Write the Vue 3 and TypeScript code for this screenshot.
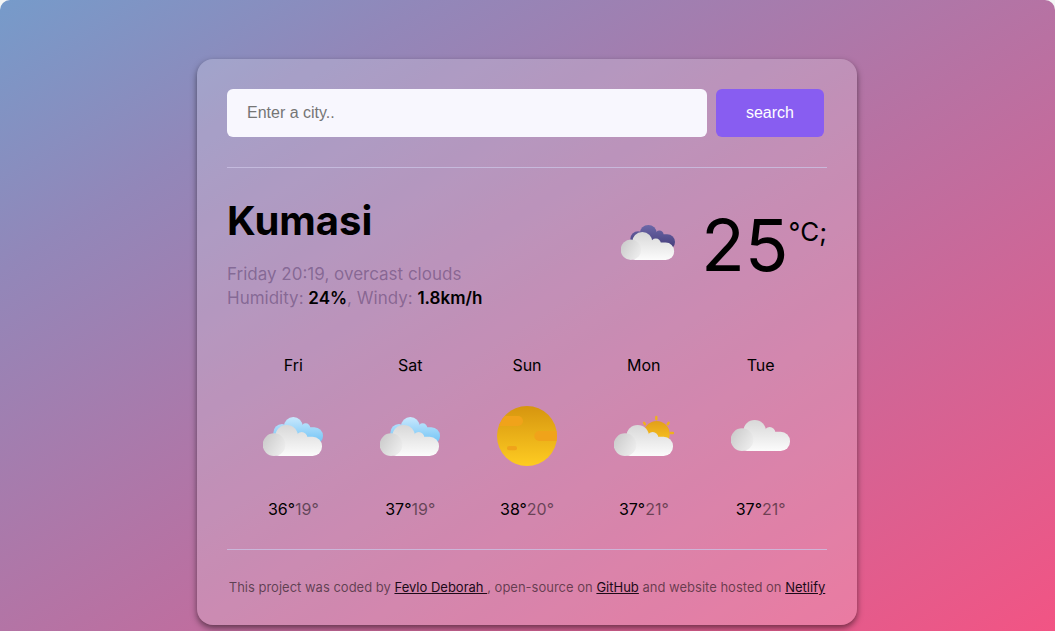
<script setup lang="ts">
import { ref } from 'vue'

type Sky = 'few' | 'clear' | 'partly' | 'cloudy'

interface ForecastDay {
  name: string
  sky: Sky
  high: number
  low: number
}

const query = ref('')

const forecast: ForecastDay[] = [
  { name: 'Fri', sky: 'few', high: 36, low: 19 },
  { name: 'Sat', sky: 'few', high: 37, low: 19 },
  { name: 'Sun', sky: 'clear', high: 38, low: 20 },
  { name: 'Mon', sky: 'partly', high: 37, low: 21 },
  { name: 'Tue', sky: 'cloudy', high: 37, low: 21 },
]
</script>

<template>
  <div class="page">
    <svg class="defs" width="0" height="0" aria-hidden="true">
      <defs>
        <linearGradient id="cloud-body" gradientUnits="userSpaceOnUse" x1="0" y1="57" x2="0" y2="149">
          <stop offset="0" stop-color="#d8d8d8" />
          <stop offset="1" stop-color="#fbfbfb" />
        </linearGradient>
        <linearGradient id="cloud-puff" x1="0.1" y1="0.2" x2="0.9" y2="0.7">
          <stop offset="0" stop-color="#cdcdcd" />
          <stop offset="1" stop-color="#ebebeb" />
        </linearGradient>
        <linearGradient id="cloud-blue" gradientUnits="userSpaceOnUse" x1="0" y1="33" x2="0" y2="115">
          <stop offset="0" stop-color="#c9e8fd" />
          <stop offset="1" stop-color="#6cc2f5" />
        </linearGradient>
        <linearGradient id="cloud-dark" gradientUnits="userSpaceOnUse" x1="0" y1="33" x2="0" y2="115">
          <stop offset="0" stop-color="#6c68a8" />
          <stop offset="1" stop-color="#423a78" />
        </linearGradient>
        <linearGradient id="sun-fill" x1="0" y1="0" x2="0" y2="1">
          <stop offset="0" stop-color="#d6950f" />
          <stop offset="1" stop-color="#fecc22" />
        </linearGradient>
        <linearGradient id="sun-small" x1="0" y1="0" x2="0" y2="1">
          <stop offset="0" stop-color="#e29f1a" />
          <stop offset="1" stop-color="#fecc22" />
        </linearGradient>
        <clipPath id="sun-disc"><circle cx="90" cy="90" r="90" /></clipPath>
        <g id="front-cloud">
          <g fill="url(#cloud-body)">
            <circle cx="71" cy="91" r="34" />
            <circle cx="116" cy="95" r="17" />
            <rect x="20" y="92" width="157" height="58" rx="28" />
          </g>
          <circle cx="33" cy="116" r="34" fill="url(#cloud-puff)" />
        </g>
        <g id="back-cloud">
          <circle cx="91" cy="61" r="28" />
          <circle cx="57" cy="80" r="26" />
          <circle cx="128" cy="66" r="14" />
          <rect x="55" y="64" width="125" height="52" rx="26" />
        </g>
      </defs>
    </svg>

    <main class="card">
      <form class="search" @submit.prevent>
        <input v-model="query" class="search-input" type="text" placeholder="Enter a city.." aria-label="City" />
        <button class="search-button" type="submit">search</button>
      </form>

      <section class="current">
        <div class="place">
          <h1 class="city">Kumasi</h1>
          <p class="details">
            Friday 20:19, overcast clouds<br />
            Humidity: <strong>24%</strong>, Windy: <strong>1.8km/h</strong>
          </p>
        </div>
        <div class="reading">
          <svg class="reading-icon" viewBox="0 0 180 180" role="img" aria-label="overcast clouds">
            <use href="#back-cloud" fill="url(#cloud-dark)" />
            <use href="#front-cloud" />
          </svg>
          <span class="degrees">25</span>
          <span class="unit">°C;</span>
        </div>
      </section>

      <section class="forecast">
        <article v-for="day in forecast" :key="day.name" class="day">
          <h2 class="day-name">{{ day.name }}</h2>
          <svg class="day-icon" viewBox="0 0 180 180" aria-hidden="true">
            <template v-if="day.sky === 'few'">
              <use href="#back-cloud" fill="url(#cloud-blue)" />
              <use href="#front-cloud" />
            </template>
            <template v-else-if="day.sky === 'clear'">
              <circle cx="90" cy="90" r="90" fill="url(#sun-fill)" />
              <g clip-path="url(#sun-disc)" fill="#f0a31a">
                <rect x="-20" y="30" width="98" height="30" rx="15" />
                <rect x="112" y="75" width="90" height="30" rx="15" />
                <rect x="30" y="120" width="30" height="13" rx="6" />
              </g>
            </template>
            <template v-else-if="day.sky === 'partly'">
              <circle cx="128" cy="84" r="39" fill="url(#sun-small)" />
              <g stroke="#efb11d" stroke-width="7" stroke-linecap="round">
                <path d="M127 33v7M90 50l3 5M164 50l-3 5M170 81h7" />
              </g>
              <use href="#front-cloud" />
            </template>
            <use v-else href="#front-cloud" y="-15" />
          </svg>
          <p class="temps">{{ day.high }}°<span class="low">{{ day.low }}°</span></p>
        </article>
      </section>

      <footer class="credits">
        This project was coded by <a href="#author">Fevlo Deborah&nbsp;</a>, open-source on
        <a href="#github">GitHub</a> and website hosted on <a href="#netlify">Netlify</a>
      </footer>
    </main>
  </div>
</template>

<style>
body {
  margin: 0;
  background: #f4f6f5;
}
</style>

<style scoped>
.page {
  box-sizing: border-box;
  min-height: 100vh;
  padding: 59px 17px 6px 16px;
  border-radius: 10px 10px 0 0;
  background: linear-gradient(148deg, #769bca 0%, #9287b9 21%, #b772a3 52%, #f25484 100%);
  font-family: Inter, "Open Sans", sans-serif;
  color: #000;
}

.defs {
  position: absolute;
}

.card {
  box-sizing: border-box;
  max-width: 660px;
  margin: 0 auto;
  padding: 30px;
  border-radius: 16px;
  background: rgba(255, 255, 255, 0.2);
  box-shadow: 0 3px 6px rgba(0, 0, 0, 0.5);
}

.search {
  display: flex;
  gap: 9px;
  padding: 0 3px 30px 0;
  border-bottom: 1px solid rgba(202, 194, 228, 0.8);
}

.search-input,
.search-button {
  box-sizing: border-box;
  height: 48px;
  border: 0;
  border-radius: 6px;
  font-family: "Liberation Sans", Arial, sans-serif;
  font-size: 16px;
}

.search-input {
  flex: 1;
  min-width: 0;
  padding: 0 20px;
  background: #f8f7fe;
  color: #222;
}

.search-input::placeholder {
  color: #757575;
}

.search-button {
  padding: 0 30px;
  background: #885df1;
  color: #fff;
  cursor: pointer;
}

.current {
  display: flex;
  justify-content: space-between;
  padding-top: 30px;
}

.city {
  margin: 0;
  font-size: 40px;
  line-height: 46px;
  font-weight: 700;
}

.details {
  margin: 18px 0 0;
  font-size: 17px;
  line-height: 24px;
  color: rgba(58, 30, 84, 0.4);
}

.details strong {
  font-weight: 600;
  color: #000;
}

.reading {
  display: flex;
  align-items: flex-start;
  padding-top: 17px;
}

.reading-icon {
  width: 54px;
  height: 54px;
  margin-right: 26px;
}

.degrees {
  font-size: 72px;
  line-height: 60px;
  font-weight: 400;
}

.unit {
  font-size: 26px;
  line-height: 34px;
}

.forecast {
  display: grid;
  grid-template-columns: repeat(5, 1fr);
  margin-top: 43px;
  padding: 0 8px 28px;
  border-bottom: 1px solid rgba(202, 194, 228, 0.8);
  text-align: center;
}

.day-name {
  margin: 0;
  font-size: 16px;
  line-height: 24px;
  font-weight: 400;
}

.day-icon {
  display: block;
  width: 60px;
  height: 60px;
  margin: 29px auto 31px;
}

.temps {
  margin: 0;
  font-size: 16px;
  line-height: 24px;
  font-weight: 400;
}

.low {
  opacity: 0.5;
}

.credits {
  padding-top: 30px;
  font-size: 13px;
  line-height: 15px;
  text-align: center;
  color: rgba(0, 0, 0, 0.55);
}

.credits a {
  color: #1c0a18;
}
</style>
